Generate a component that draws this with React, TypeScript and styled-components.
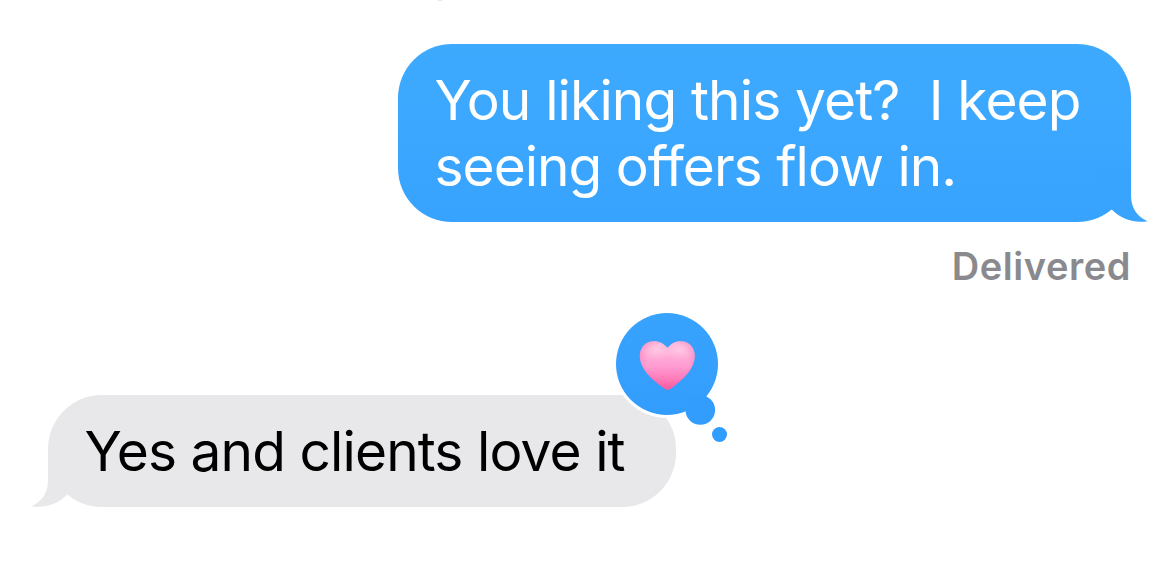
import React from 'react'
import styled, {createGlobalStyle, css} from 'styled-components'

type Side = 'sent' | 'received'

interface MessageProps {
  children: React.ReactNode
  side: Side
  reaction?: React.ReactNode
}

const GlobalStyle = createGlobalStyle`
  body {
    margin: 0;
    background: #fff;
    overflow: hidden;
  }
`

const Thread = styled.main`
  box-sizing: border-box;
  display: flex;
  flex-direction: column;
  width: 1170px;
  height: 588px;
  padding: 44px 39px 0 48px;
  position: relative;
  overflow: hidden;
  background: #fff;
  font-family: Inter, 'Liberation Sans', sans-serif;
`

// Last sliver of the timestamp that is scrolled off the top
const ScrolledMark = styled.div`
  position: absolute;
  top: 0;
  left: 438px;
  width: 4px;
  height: 1px;
  background: #e6e6e8;
`

const Bubble = styled.div<{$side: Side}>`
  box-sizing: border-box;
  position: relative;
  padding: 23px 0 23px 36.5px;
  border-radius: 54px;
  font-size: 55px;
  font-weight: 430;
  line-height: 66px;
  white-space: pre;

  ${({$side}) =>
    $side === 'sent'
      ? css`
          align-self: flex-end;
          width: 733px;
          color: #fff;
          background: linear-gradient(#3eaafe, #38a3fe);
        `
      : css`
          align-self: flex-start;
          width: 628px;
          color: #000;
          background: #e8e8ea;
        `}
`

const Line = styled.div<{$spacing: number}>`
  letter-spacing: ${({$spacing}) => $spacing}px;
`

const Tail = styled.svg<{$side: Side}>`
  position: absolute;
  bottom: 0;
  width: 50px;
  height: 54px;
  fill: ${({$side}) => ($side === 'sent' ? '#39a4fe' : '#e8e8ea')};
  ${({$side}) => ($side === 'sent' ? 'right: -17px;' : 'left: -17px; transform: scaleX(-1);')}
`

const Status = styled.div`
  align-self: flex-end;
  height: 48px;
  margin: 20px 0 105px;
  color: #8a8a8e;
  font-size: 38px;
  font-weight: 600;
  line-height: 48px;
  letter-spacing: 0.55px;
`

const ReactionBadge = styled.svg`
  position: absolute;
  top: -86px;
  right: -56px;
  width: 120px;
  height: 136px;
`

function HeartReaction() {
  return (
    <ReactionBadge viewBox="0 0 120 136">
      <defs>
        <linearGradient id="balloon" x1="0" y1="0" x2="0" y2="1">
          <stop offset="0" stopColor="#38a3fd" />
          <stop offset="1" stopColor="#339dfd" />
        </linearGradient>
        <linearGradient id="heart" x1="0" y1="0" x2="0" y2="1">
          <stop offset="0" stopColor="#ffb9dc" />
          <stop offset="0.5" stopColor="#ff9dd2" />
          <stop offset="0.78" stopColor="#fe78b7" />
          <stop offset="1" stopColor="#fa559d" />
        </linearGradient>
        <radialGradient id="shine">
          <stop offset="0" stopColor="#ffd3e8" stopOpacity="0.7" />
          <stop offset="1" stopColor="#ffc4e2" stopOpacity="0" />
        </radialGradient>
        <radialGradient id="edge" cx="0.5" cy="0.42" r="0.6">
          <stop offset="0.62" stopColor="#f65fa5" stopOpacity="0" />
          <stop offset="1" stopColor="#f65fa5" stopOpacity="0.5" />
        </radialGradient>
        <clipPath id="heartClip">
          <path d="M55.5 39C59 34.8 63 32.300 68.500 32.300C76.800 32.300 82.800 38.300 82.800 46.800C82.800 60.500 70 71.500 59.200 79.300Q55.800 82.300 52.200 79.300C41 71.500 27.800 60.500 27.800 46.800C27.800 38.300 34 32.300 42 32.300C47.500 32.300 52 34.800 55.500 39Z" />
        </clipPath>
      </defs>
      <circle cx="55" cy="55" r="54" fill="#fff" />
      <circle cx="55" cy="55" r="51" fill="url(#balloon)" />
      <circle cx="88.300" cy="101" r="14.800" fill="#339dfd" />
      <circle cx="107.500" cy="125.500" r="7.500" fill="#339dfd" />
      <g clipPath="url(#heartClip)">
        <rect x="27" y="32" width="57" height="50" fill="url(#heart)" />
        <rect x="27" y="32" width="57" height="50" fill="url(#edge)" />
        <ellipse cx="45" cy="41" rx="17" ry="11" fill="url(#shine)" />
        <ellipse cx="67" cy="41" rx="17" ry="11" fill="url(#shine)" />
      </g>
    </ReactionBadge>
  )
}

function Message(props: MessageProps) {
  const {children, side, reaction} = props

  return (
    <Bubble $side={side}>
      <Tail $side={side} viewBox="0 0 50 54">
        <path d="M0 0H33V27C33 40 39 48.500 49.500 53.200C37 55.500 23.500 51.500 14 41.800L0 30Z" />
      </Tail>
      {children}
      {reaction}
    </Bubble>
  )
}

export default function App() {
  return (
    <Thread>
      <GlobalStyle />
      <ScrolledMark />
      <Message side="sent">
        <Line $spacing={-0.86}>{'You liking this yet?  I keep'}</Line>
        <Line $spacing={-0.98}>seeing offers flow in.</Line>
      </Message>
      <Status>Delivered</Status>
      <Message side="received" reaction={<HeartReaction />}>
        <Line $spacing={-0.89}>Yes and clients love it</Line>
      </Message>
    </Thread>
  )
}
